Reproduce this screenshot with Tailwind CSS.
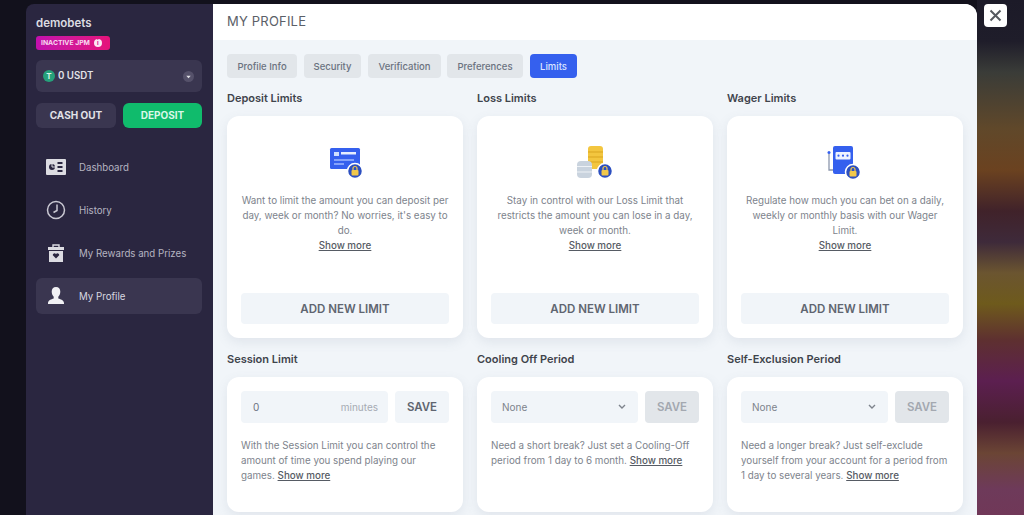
<!DOCTYPE html>
<html lang="en">
<head>
  <meta charset="UTF-8" />
  <title>My Profile</title>
  <script src="https://cdn.jsdelivr.net/npm/@tailwindcss/browser@4"></script>
</head>
<body class="bg-[#12111c] font-['Inter',sans-serif] overflow-hidden">
<div class="relative w-[1024px] h-[515px] overflow-hidden pt-1 pl-[26px] flex">

  <!-- blurred casino page behind the modal -->
  <div class="absolute right-0 top-0 w-[47px] h-full bg-[linear-gradient(180deg,#1c1a28_0%,#1f1d2a_8%,#3a3c38_14%,#60482a_25%,#6b4220_33%,#40222a_41%,#3e2a3a_47%,#6b5530_53%,#6e5a1c_59%,#5e3030_66%,#5c1f50_74%,#4a2030_82%,#6b4535_88%,#6e3a5a_95%,#703858_100%)]"></div>

  <!-- sidebar -->
  <aside class="w-[187px] h-[511px] shrink-0 bg-[#2a2640] rounded-tl-lg pl-2.5 pr-[11px] pt-[11px] relative">
    <div class="text-[#dcdce2] text-[11.5px] font-semibold leading-4">demobets</div>
    <div class="mt-[5px] flex items-center gap-1 h-[14px] w-[74px] pl-[5px] rounded-[3px] bg-gradient-to-r from-[#c30fae] to-[#e5127a] text-[#f8d8f0] text-[6.8px] font-bold whitespace-nowrap">
      INACTIVE JPM
      <span class="w-2 h-2 rounded-full bg-white/90 text-[#d0108f] text-[6px] leading-2 text-center">i</span>
    </div>
    <div class="mt-[10px] h-8 rounded-md bg-[#3a3650] flex items-center pl-[7px] pr-2">
      <span class="w-3 h-3 rounded-full bg-[#26a17b] text-[#d8f5ea] text-[8px] font-bold leading-3 text-center">T</span>
      <span class="ml-[3px] text-[#e2e2e8] text-[9.7px] font-semibold">0 USDT</span>
      <span class="ml-auto w-[11px] h-[11px] rounded-full bg-[#55516a] flex items-center justify-center">
        <svg width="7" height="7" viewBox="0 0 8 8"><path d="M1.5 3h5L4 6z" fill="#e2e2e8"/></svg>
      </span>
    </div>
    <div class="mt-[11px] flex gap-[7px]">
      <button class="w-[80px] h-[25px] rounded-md bg-[#3a3650] text-[#e2e2e8] text-[10px] font-bold">CASH OUT</button>
      <button class="w-[79px] h-[25px] rounded-md bg-[#10bb6c] text-[#d9f8e8] text-[10px] font-bold">DEPOSIT</button>
    </div>

    <nav class="mt-[21px] flex flex-col gap-[7px] text-[#b5b4c0] text-[9.7px]">
      <a class="h-9 flex items-center pl-[10px] gap-[13px]">
        <svg width="20" height="16" viewBox="0 0 20 16"><rect width="20" height="16" rx="1" fill="#dcdce2"/><circle cx="6" cy="8" r="3" fill="#2a2640"/><path d="M6 5v3h3" fill="none" stroke="#dcdce2" stroke-width="1"/><path d="M11.500 4h5M11.500 8h5M11.500 12h5" stroke="#2a2640" stroke-width="1.800"/></svg>
        <span class="pt-0.5">Dashboard</span>
      </a>
      <a class="h-9 flex items-center pl-[10px] gap-[13px]">
        <svg width="20" height="20" viewBox="0 0 20 20" fill="none" stroke="#c9c8d2"><circle cx="10" cy="10" r="8.500" stroke-width="1.500"/><path d="M11 4.500V10.500L7.500 12.500" stroke-width="1.500"/></svg>
        <span class="pt-0.5">History</span>
      </a>
      <a class="h-9 flex items-center pl-[10px] gap-[13px]">
        <svg width="20" height="20" viewBox="0 0 20 20"><path d="M2 4h16v3H2zM3 8h14v11H3z" fill="#dcdce2"/><path d="M7 4V2h6v2" fill="none" stroke="#dcdce2" stroke-width="1.400"/><path d="M10 15.500 6.800 12.300a1.700 1.700 0 0 1 3.200-1 1.700 1.700 0 0 1 3.200 1z" fill="#2a2640"/></svg>
        <span class="pt-0.5">My Rewards and Prizes</span>
      </a>
      <a class="h-9 flex items-center pl-[10px] gap-[13px] rounded-md bg-[#3a3650] text-[#d8d8e0]">
        <svg width="20" height="20" viewBox="0 0 20 20" fill="#f1f1f4"><path d="M10 1c2.800 0 4.300 2 4.300 4.700 0 2.300-1 4-2 5v1.800c2.500.8 5.500 1.800 5.700 4.500v1H2v-1c.2-2.700 3.200-3.700 5.700-4.500v-1.800c-1-1-2-2.700-2-5C5.700 3 7.200 1 10 1z"/></svg>
        <span class="pt-0.5">My Profile</span>
      </a>
    </nav>
  </aside>

  <!-- modal -->
  <main class="w-[764px] h-[511px] shrink-0 bg-[#f1f5f9] rounded-tr-xl overflow-hidden">
    <header class="h-9 bg-white pl-3.5 flex items-center text-[#5b6068] text-[13px] tracking-[0.2px]">MY PROFILE</header>

    <div class="px-3.5 pt-3.5">
      <div class="flex text-[9.5px] text-[#6b7280] font-medium">
        <span class="h-6 w-[70px] pt-0.5 rounded bg-[#e2e6ea] flex items-center justify-center">Profile Info</span>
        <span class="ml-[7px] h-6 w-[57px] pt-0.5 rounded bg-[#e2e6ea] flex items-center justify-center">Security</span>
        <span class="ml-[7px] h-6 w-[73px] pt-0.5 rounded bg-[#e2e6ea] flex items-center justify-center">Verification</span>
        <span class="ml-1.5 h-6 w-[76px] pt-0.5 rounded bg-[#e2e6ea] flex items-center justify-center">Preferences</span>
        <span class="ml-[7px] h-6 w-[47px] pt-0.5 rounded bg-[#3560ee] text-[#dbe4ff] flex items-center justify-center">Limits</span>
      </div>

      <div class="mt-3 grid grid-cols-3 gap-x-3.5 w-[736px]">
        <section>
          <h2 class="text-[11px] leading-4 font-semibold text-[#3f444c]">Deposit Limits</h2>
          <div class="mt-[10px] h-[222px] bg-white rounded-xl shadow-[0_4px_12px_rgba(100,116,139,0.12)] p-3.5 flex flex-col items-center">
            <svg class="mt-4 overflow-visible" width="34" height="32" viewBox="0 0 34 32"><rect x="2" y="2" width="30" height="21" rx="1.500" fill="#3560ee"/><rect x="6" y="6" width="5" height="4" fill="#cfe0ff"/><rect x="13" y="6" width="15" height="2.500" fill="#e6eeff"/><path d="M6 14h20M6 18h10" stroke="#9fb8ff" stroke-width="1.500"/><circle cx="27" cy="25" r="7.500" fill="#2c4fc0" stroke="#fff" stroke-width="1.500"/><rect x="23.500" y="24" width="7" height="5.500" rx="1" fill="#f1c84b"/><path d="M25 24v-1.500a2 2 0 0 1 4 0V24" fill="none" stroke="#f1c84b" stroke-width="1.200"/></svg>
            <p class="mt-[15px] text-[9.8px] leading-[15px] text-[#7d838c] text-center">Want to limit the amount you can deposit per day, week or month? No worries, it's easy to do.<br><a class="underline font-medium text-[#565b64]">Show more</a></p>
            <button class="mt-auto w-full h-[31px] pt-0.5 rounded bg-[#f1f5f9] text-[#5f6570] text-[11.5px] font-semibold">ADD NEW LIMIT</button>
          </div>
        </section>
        <section>
          <h2 class="text-[11px] leading-4 font-semibold text-[#3f444c]">Loss Limits</h2>
          <div class="mt-[10px] h-[222px] bg-white rounded-xl shadow-[0_4px_12px_rgba(100,116,139,0.12)] p-3.5 flex flex-col items-center">
            <svg class="mt-4 overflow-visible" width="36" height="32" viewBox="0 0 36 32"><rect x="11" y="0" width="15" height="23" rx="3" fill="#f3c63f"/><path d="M11 6h15M11 11h15M11 16h15" stroke="#d9a520" stroke-width="1"/><rect x="0" y="15" width="15" height="17" rx="4" fill="#c9d3de"/><path d="M0 20.500h15M0 26h15" stroke="#eef2f6" stroke-width="1"/><circle cx="28" cy="25" r="7.500" fill="#2c4fc0" stroke="#fff" stroke-width="1.500"/><rect x="24.500" y="24" width="7" height="5.500" rx="1" fill="#f1c84b"/><path d="M26 24v-1.500a2 2 0 0 1 4 0V24" fill="none" stroke="#f1c84b" stroke-width="1.200"/></svg>
            <p class="mt-[15px] text-[9.8px] leading-[15px] text-[#7d838c] text-center">Stay in control with our Loss Limit that restricts the amount you can lose in a day, week or month.<br><a class="underline font-medium text-[#565b64]">Show more</a></p>
            <button class="mt-auto w-full h-[31px] pt-0.5 rounded bg-[#f1f5f9] text-[#5f6570] text-[11.5px] font-semibold">ADD NEW LIMIT</button>
          </div>
        </section>
        <section>
          <h2 class="text-[11px] leading-4 font-semibold text-[#3f444c]">Wager Limits</h2>
          <div class="mt-[10px] h-[222px] bg-white rounded-xl shadow-[0_4px_12px_rgba(100,116,139,0.12)] p-3.5 flex flex-col items-center">
            <svg class="mt-4 overflow-visible" width="36" height="32" viewBox="0 0 36 32"><rect x="6" y="0" width="20" height="28" rx="2" fill="#3560ee"/><rect x="8.500" y="6" width="15" height="7.500" rx="1" fill="#eef3ff"/><circle cx="11.500" cy="9.700" r="1.100" fill="#3560ee"/><circle cx="16" cy="9.700" r="1.100" fill="#3560ee"/><circle cx="20.500" cy="9.700" r="1.100" fill="#3560ee"/><path d="M2 8v16h4" fill="none" stroke="#8c97ad" stroke-width="1.300"/><circle cx="2" cy="6.500" r="1.500" fill="#3560ee"/><circle cx="26" cy="26" r="7.500" fill="#2c4fc0" stroke="#fff" stroke-width="1.500"/><rect x="22.500" y="25" width="7" height="5.500" rx="1" fill="#f1c84b"/><path d="M24 25v-1.500a2 2 0 0 1 4 0V25" fill="none" stroke="#f1c84b" stroke-width="1.200"/></svg>
            <p class="mt-[15px] text-[9.8px] leading-[15px] text-[#7d838c] text-center">Regulate how much you can bet on a daily, weekly or monthly basis with our Wager Limit.<br><a class="underline font-medium text-[#565b64]">Show more</a></p>
            <button class="mt-auto w-full h-[31px] pt-0.5 rounded bg-[#f1f5f9] text-[#5f6570] text-[11.5px] font-semibold">ADD NEW LIMIT</button>
          </div>
        </section>

        <section class="mt-[13px]">
          <h2 class="text-[11px] leading-4 font-semibold text-[#3f444c]">Session Limit</h2>
          <div class="mt-[10px] h-[135px] bg-white rounded-xl shadow-[0_4px_12px_rgba(100,116,139,0.12)] p-3.5">
            <div class="flex gap-[7px]">
              <div class="flex-1 h-8 rounded bg-[#f1f5f9] flex items-center justify-between pl-3 pr-2.5 text-[10px]"><span class="text-[#6b7280]">0</span><span class="text-[#a6abb3]">minutes</span></div>
              <button class="w-[54px] h-8 pt-0.5 rounded bg-[#f1f5f9] text-[#5f6570] text-[11.5px] font-semibold">SAVE</button>
            </div>
            <p class="mt-[15px] text-[9.8px] leading-[15px] text-[#7d838c]">With the Session Limit you can control the amount of time you spend playing our games. <a class="underline font-medium text-[#565b64]">Show more</a></p>
          </div>
        </section>
        <section class="mt-[13px]">
          <h2 class="text-[11px] leading-4 font-semibold text-[#3f444c]">Cooling Off Period</h2>
          <div class="mt-[10px] h-[135px] bg-white rounded-xl shadow-[0_4px_12px_rgba(100,116,139,0.12)] p-3.5">
            <div class="flex gap-[7px]">
              <div class="flex-1 h-8 rounded bg-[#f1f5f9] flex items-center justify-between pl-[11px] pr-3 text-[10px] text-[#7d838c]"><span>None</span><svg width="8" height="6" viewBox="0 0 8 6" fill="none" stroke="#7d838c" stroke-width="1.400"><path d="M1 1l3 3 3-3"/></svg></div>
              <button class="w-[54px] h-8 pt-0.5 rounded bg-[#e2e6ea] text-[#a3a8b0] text-[11.5px] font-semibold">SAVE</button>
            </div>
            <p class="mt-[15px] text-[9.8px] leading-[15px] text-[#7d838c]">Need a short break? Just set a Cooling-Off period from 1 day to 6 month. <a class="underline font-medium text-[#565b64]">Show more</a></p>
          </div>
        </section>
        <section class="mt-[13px]">
          <h2 class="text-[11px] leading-4 font-semibold text-[#3f444c]">Self-Exclusion Period</h2>
          <div class="mt-[10px] h-[135px] bg-white rounded-xl shadow-[0_4px_12px_rgba(100,116,139,0.12)] p-3.5">
            <div class="flex gap-[7px]">
              <div class="flex-1 h-8 rounded bg-[#f1f5f9] flex items-center justify-between pl-[11px] pr-3 text-[10px] text-[#7d838c]"><span>None</span><svg width="8" height="6" viewBox="0 0 8 6" fill="none" stroke="#7d838c" stroke-width="1.400"><path d="M1 1l3 3 3-3"/></svg></div>
              <button class="w-[54px] h-8 pt-0.5 rounded bg-[#e2e6ea] text-[#a3a8b0] text-[11.5px] font-semibold">SAVE</button>
            </div>
            <p class="mt-[15px] text-[9.8px] leading-[15px] text-[#7d838c]">Need a longer break? Just self-exclude yourself from your account for a period from 1 day to several years. <a class="underline font-medium text-[#565b64]">Show more</a></p>
          </div>
        </section>
      </div>
    </div>
  </main>

  <button class="absolute left-[984px] top-1 w-[23px] h-[23px] rounded bg-white flex items-center justify-center">
    <svg width="13" height="13" viewBox="0 0 13 13" stroke="#55595f" stroke-width="2"><path d="M1.500 1.500l10 10M11.500 1.500l-10 10"/></svg>
  </button>
</div>
</body>
</html>
